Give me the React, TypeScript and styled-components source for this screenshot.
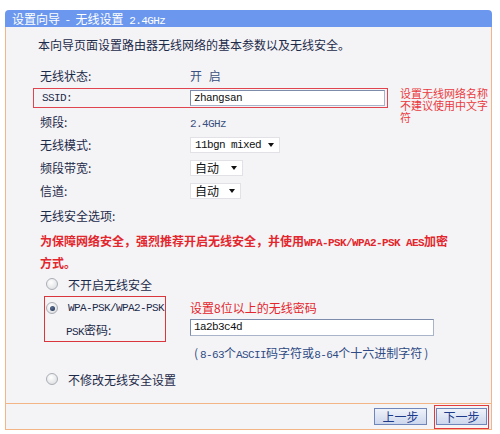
import styled, { createGlobalStyle } from "styled-components";

const CJK = `"Noto Sans CJK SC", "Noto Sans", sans-serif`;
const MONO = `"Liberation Mono", "Noto Sans CJK SC", monospace`;

const TEXT = "#1e2a4a";
const VALUE = "#3a5080";
const RED = "#e3262d";
const ORANGE = "#f3b585";

const GlobalStyle = createGlobalStyle`
  body {
    margin: 0;
    background: #fff;
    font-family: ${CJK};
    font-size: 12px;
    color: ${TEXT};
  }
  * { box-sizing: border-box; }
`;

const Panel = styled.div`
  margin: 10px 0 0 5px;
  width: 487px;
`;

const TitleBar = styled.div`
  height: 17px;
  background: #6b97ee;
  border-radius: 4px 4px 0 0;
  color: #fff;
  padding-left: 7px;
  line-height: 17px;
  font-size: 12px;
  white-space: nowrap;
  word-spacing: 3px;
`;

const Body = styled.div`
  border: 1px solid ${ORANGE};
  border-top: none;
  background: #f4f4f6;
`;

const Content = styled.div`
  height: 376px;
  padding: 9px 0 0 27px;
`;

const Mono = styled.span`
  font-family: ${MONO};
  font-size: 11px;
  letter-spacing: -0.6px;
`;

const Intro = styled.div`
  line-height: 18px;
  padding-left: 5px;
  white-space: nowrap;
`;

const Rows = styled.div`
  margin-top: 10px;
`;

const Row = styled.div<{ $top?: number }>`
  display: grid;
  grid-template-columns: 150px auto;
  align-items: center;
  height: 23px;
  padding-left: 7px;
  margin-top: ${(p) => p.$top ?? 0}px;
`;

const Value = styled.span`
  color: ${VALUE};
  word-spacing: 4px;
`;

const SsidLine = styled.div`
  display: flex;
  align-items: flex-start;
  margin-top: 1px;
  height: 20px;
`;

const SsidBox = styled.div`
  display: grid;
  grid-template-columns: 148px auto;
  align-items: center;
  width: 355px;
  height: 20px;
  border: 1px solid #e0454f;
  padding-left: 8px;
`;

const Note = styled.div`
  margin: -1px 0 0 12px;
  width: 90px;
  color: #ea3a40;
  font-size: 11px;
  line-height: 12px;
`;

const TextInput = styled.div<{ $w: number; $h?: number }>`
  width: ${(p) => p.$w}px;
  height: ${(p) => p.$h ?? 16}px;
  background: #fff;
  border: 1px solid #7d8cab;
  border-right-color: #a9b4ca;
  border-bottom-color: #a9b4ca;
  padding-left: 3px;
  line-height: ${(p) => (p.$h ?? 16) - 2}px;
  font-family: ${MONO};
  font-size: 11px;
  letter-spacing: -0.6px;
  color: #111;
`;

const Select = styled.div<{ $w: number }>`
  display: flex;
  align-items: center;
  justify-content: space-between;
  width: ${(p) => p.$w}px;
  height: 16px;
  background: #fff;
  border: 1px solid #e2e2e6;
  padding: 0 5px 0 4px;
  color: #111;
`;

const Arrow = styled.span`
  width: 0;
  height: 0;
  border-left: 3.5px solid transparent;
  border-right: 3.5px solid transparent;
  border-top: 4px solid #111;
`;

const Section = styled.div`
  margin-top: 3px;
  padding-left: 7px;
  line-height: 22px;
`;

const Warning = styled.div`
  margin-top: 4px;
  padding-left: 7px;
  line-height: 19px;
  color: ${RED};
  font-weight: bold;
  white-space: nowrap;
`;

const RadioRow = styled.div<{ $top?: number; $left?: number }>`
  display: flex;
  align-items: center;
  gap: 10px;
  height: 22px;
  padding-left: ${(p) => p.$left ?? 13}px;
  margin-top: ${(p) => p.$top ?? 0}px;
`;

const Radio = styled.span<{ $on?: boolean }>`
  position: relative;
  width: 12px;
  height: 12px;
  border-radius: 50%;
  border: 1px solid #a9adb5;
  background: radial-gradient(circle at 40% 35%, #ffffff, #d6d8dc);
  &::after {
    content: "";
    display: ${(p) => (p.$on ? "block" : "none")};
    position: absolute;
    left: 2.5px;
    top: 2.5px;
    width: 5px;
    height: 5px;
    border-radius: 50%;
    background: radial-gradient(circle at 40% 35%, #5a7096, #1e2d4a);
  }
`;

const WpaBlock = styled.div`
  display: flex;
  margin-top: 1px;
`;

const WpaBox = styled.div`
  margin-left: 11px;
  width: 122px;
  height: 46px;
  border: 1px solid #d9363e;
`;

const PskLabel = styled.div`
  height: 22px;
  line-height: 22px;
  padding-left: 21px;
`;

const WpaSide = styled.div`
  margin-left: 24px;
`;

const RedHint = styled.div`
  height: 23px;
  line-height: 23px;
  color: ${RED};
`;

const Hint = styled.div`
  margin-left: 159px;
  line-height: 22px;
  color: #2f4a84;
  white-space: nowrap;
`;

const Paren = styled.span`
  margin: 0 2px;
`;

const ButtonBar = styled.div`
  display: flex;
  justify-content: flex-end;
  align-items: center;
  gap: 9px;
  height: 26px;
  border-top: 1px solid ${ORANGE};
  padding-right: 4px;
`;

const Button = styled.button<{ $w: number; $marked?: boolean }>`
  position: relative;
  width: ${(p) => p.$w}px;
  height: 17px;
  padding: 0;
  border: 1px solid #6f86bb;
  background: linear-gradient(#eef2fa, #cdd7ec);
  color: #1d3a8a;
  font-family: ${CJK};
  font-size: 12px;
  line-height: 15px;
  &::after {
    content: "";
    display: ${(p) => (p.$marked ? "block" : "none")};
    position: absolute;
    inset: -4px -3px -5px -3px;
    border: 1px solid #e33a3f;
  }
`;

export default function App() {
  return (
    <>
      <GlobalStyle />
      <Panel>
        <TitleBar>
          设置向导 - 无线设置 <Mono>2.4GHz</Mono>
        </TitleBar>
        <Body>
          <Content>
            <Intro>本向导页面设置路由器无线网络的基本参数以及无线安全。</Intro>
            <Rows>
              <Row>
                <span>无线状态:</span>
                <Value>开 启</Value>
              </Row>
              <SsidLine>
                <SsidBox>
                  <Mono>SSID:</Mono>
                  <TextInput $w={195}>zhangsan</TextInput>
                </SsidBox>
                <Note>设置无线网络名称不建议使用中文字符</Note>
              </SsidLine>
              <Row $top={2}>
                <span>频段:</span>
                <Value>
                  <Mono>2.4GHz</Mono>
                </Value>
              </Row>
              <Row>
                <span>无线模式:</span>
                <Select $w={90}>
                  <Mono>11bgn mixed</Mono>
                  <Arrow />
                </Select>
              </Row>
              <Row>
                <span>频段带宽:</span>
                <Select $w={53}>
                  <span>自动</span>
                  <Arrow />
                </Select>
              </Row>
              <Row>
                <span>信道:</span>
                <Select $w={51}>
                  <span>自动</span>
                  <Arrow />
                </Select>
              </Row>
            </Rows>
            <Section>无线安全选项:</Section>
            <Warning>
              为保障网络安全，强烈推荐开启无线安全，并使用
              <Mono>WPA-PSK/WPA2-PSK AES</Mono>加密
              <br />
              方式。
            </Warning>
            <RadioRow $top={1}>
              <Radio />
              <span>不开启无线安全</span>
            </RadioRow>
            <WpaBlock>
              <WpaBox>
                <RadioRow $left={1}>
                  <Radio $on />
                  <Mono>WPA-PSK/WPA2-PSK</Mono>
                </RadioRow>
                <PskLabel>
                  <Mono>PSK</Mono>密码:
                </PskLabel>
              </WpaBox>
              <WpaSide>
                <RedHint>设置8位以上的无线密码</RedHint>
                <TextInput $w={244} $h={17}>
                  1a2b3c4d
                </TextInput>
              </WpaSide>
            </WpaBlock>
            <Hint>
              <Paren>(</Paren>
              <Mono>8-63</Mono>个<Mono>ASCII</Mono>码字符或<Mono>8-64</Mono>个十六进制字符
              <Paren>)</Paren>
            </Hint>
            <RadioRow $top={2}>
              <Radio />
              <span>不修改无线安全设置</span>
            </RadioRow>
          </Content>
          <ButtonBar>
            <Button $w={53}>上一步</Button>
            <Button $w={51} $marked>
              下一步
            </Button>
          </ButtonBar>
        </Body>
      </Panel>
    </>
  );
}
